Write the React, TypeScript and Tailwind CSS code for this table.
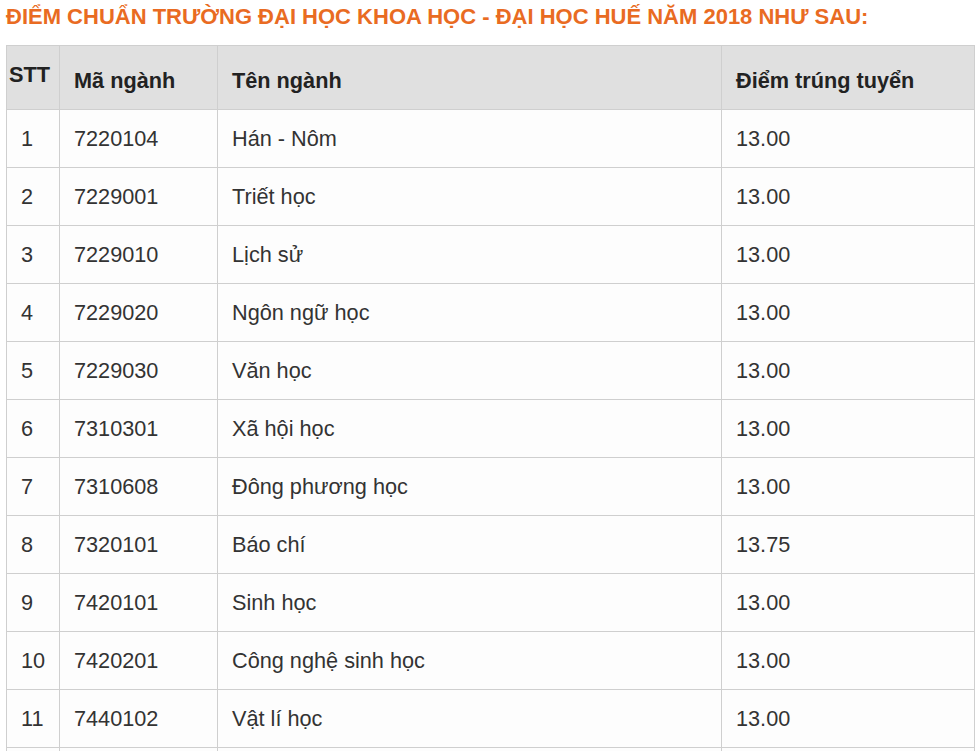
import React from "react";

const rows: [string, string, string, string][] = [
  ["1", "7220104", "Hán - Nôm", "13.00"],
  ["2", "7229001", "Triết học", "13.00"],
  ["3", "7229010", "Lịch sử", "13.00"],
  ["4", "7229020", "Ngôn ngữ học", "13.00"],
  ["5", "7229030", "Văn học", "13.00"],
  ["6", "7310301", "Xã hội học", "13.00"],
  ["7", "7310608", "Đông phương học", "13.00"],
  ["8", "7320101", "Báo chí", "13.75"],
  ["9", "7420101", "Sinh học", "13.00"],
  ["10", "7420201", "Công nghệ sinh học", "13.00"],
  ["11", "7440102", "Vật lí học", "13.00"],
];

export default function App() {
  return (
    <div
      className="bg-white w-[980px] h-[751px] overflow-hidden"
      style={{ fontFamily: '"Liberation Sans", Arial, sans-serif' }}
    >
      <div className="h-[45px] pl-[6px] pt-[5px] text-[22px] leading-[24px] font-bold text-[#e96b22] whitespace-nowrap">
        ĐIỂM CHUẨN TRƯỜNG ĐẠI HỌC KHOA HỌC - ĐẠI HỌC HUẾ NĂM 2018 NHƯ SAU:
      </div>
      <table className="ml-[6px] w-[968px] border-collapse table-fixed text-[21.7px]">
        <colgroup>
          <col className="w-[53px]" />
          <col className="w-[158px]" />
          <col className="w-[504px]" />
          <col className="w-[253px]" />
        </colgroup>
        <thead>
          <tr className="h-[64px] bg-[#e0e0e0] text-[#222]">
            <th className="border border-[#cfcfcf] px-[2px] pb-[5px] text-left font-bold align-middle">
              STT
            </th>
            <th className="border border-[#cfcfcf] pl-[14px] pt-[7px] text-left font-bold align-middle">
              Mã ngành
            </th>
            <th className="border border-[#cfcfcf] pl-[14px] pt-[7px] text-left font-bold align-middle">
              Tên ngành
            </th>
            <th className="border border-[#cfcfcf] pl-[14px] pt-[7px] text-left font-bold align-middle">
              Điểm trúng tuyển
            </th>
          </tr>
        </thead>
        <tbody>
          {rows.map((r) => (
            <tr key={r[0]} className="h-[58px] bg-[#fdfdfd] text-[#333]">
              {r.map((c, i) => (
                <td
                  key={i}
                  className="border border-[#cfcfcf] pl-[14px] pt-[2px] align-middle whitespace-nowrap"
                >
                  {c}
                </td>
              ))}
            </tr>
          ))}
          <tr className="h-[58px] bg-[#fdfdfd]">
            <td className="border border-[#cfcfcf]"></td>
            <td className="border border-[#cfcfcf]"></td>
            <td className="border border-[#cfcfcf]"></td>
            <td className="border border-[#cfcfcf]"></td>
          </tr>
        </tbody>
      </table>
    </div>
  );
}
